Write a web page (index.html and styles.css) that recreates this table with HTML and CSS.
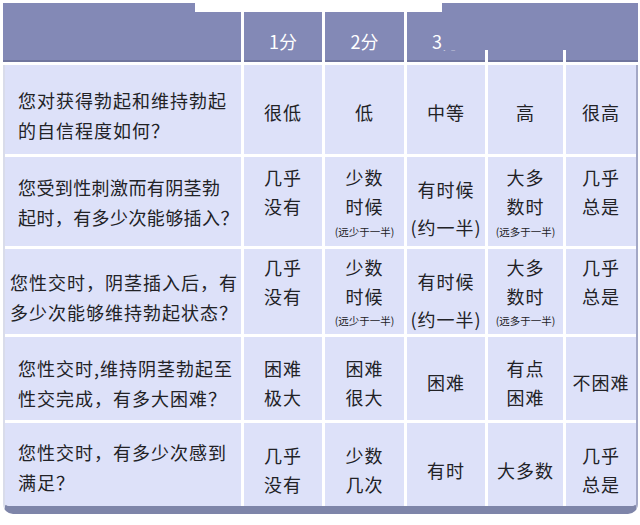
FILE: index.html
```html
<!DOCTYPE html>
<html lang="zh-CN">
<head>
<meta charset="utf-8">
<title>IIEF-5</title>
<link rel="stylesheet" href="styles.css">
</head>
<body>
<div class="sheet">
  <div class="head">
    <div class="hcell"></div>
    <div class="hcell">1分</div>
    <div class="hcell">2分</div>
    <div class="hcell">3分</div>
    <div class="hcell"></div>
    <div class="hcell"></div>
  </div>
  <div class="body">
    <div class="row r1">
      <div class="cell q">您对获得勃起和维持勃起<br>的自信程度如何？</div>
      <div class="cell a">很低</div>
      <div class="cell a">低</div>
      <div class="cell a">中等</div>
      <div class="cell a">高</div>
      <div class="cell a">很高</div>
    </div>
    <div class="row r2">
      <div class="cell q narrow">您受到性刺激而有阴茎勃<br>起时，有多少次能够插入？</div>
      <div class="cell a top"><span>几乎</span><span>没有</span></div>
      <div class="cell a top"><span>少数</span><span>时候</span><span class="small">(远少于一半)</span></div>
      <div class="cell a half"><span>有时候</span><span class="paren">(约一半)</span></div>
      <div class="cell a top"><span>大多</span><span>数时</span><span class="small">(远多于一半)</span></div>
      <div class="cell a top"><span>几乎</span><span>总是</span></div>
    </div>
    <div class="row r3">
      <div class="cell q tight">您性交时，阴茎插入后，有<br>多少次能够维持勃起状态？</div>
      <div class="cell a top"><span>几乎</span><span>没有</span></div>
      <div class="cell a top"><span>少数</span><span>时候</span><span class="small">(远少于一半)</span></div>
      <div class="cell a half"><span>有时候</span><span class="paren">(约一半)</span></div>
      <div class="cell a top"><span>大多</span><span>数时</span><span class="small">(远多于一半)</span></div>
      <div class="cell a top"><span>几乎</span><span>总是</span></div>
    </div>
    <div class="row r4">
      <div class="cell q">您性交时,维持阴茎勃起至<br>性交完成，有多大困难？</div>
      <div class="cell a">困难<br>极大</div>
      <div class="cell a">困难<br>很大</div>
      <div class="cell a">困难</div>
      <div class="cell a">有点<br>困难</div>
      <div class="cell a">不困难</div>
    </div>
    <div class="row r5">
      <div class="cell q">您性交时，有多少次感到<br>满足？</div>
      <div class="cell a">几乎<br>没有</div>
      <div class="cell a">少数<br>几次</div>
      <div class="cell a">有时</div>
      <div class="cell a">大多数</div>
      <div class="cell a">几乎<br>总是</div>
    </div>
  </div>
  <div class="mask-top"></div>
  <div class="mask-head"></div>
</div>
</body>
</html>
```
FILE: styles.css
```css
html, body {
  margin: 0;
  padding: 0;
  background: #ffffff;
}
body {
  font-family: "Noto Sans CJK SC", "Noto Sans", sans-serif;
  color: #222226;
}
.sheet {
  position: relative;
  margin: 3px 0 0 3px;
  width: 635px;
}
.head {
  display: grid;
  grid-template-columns: 238px 78px 79px 78px 75px 72px;
  column-gap: 3px;
}
.hcell {
  box-sizing: border-box;
  height: 59px;
  padding-top: 18px;
  background: #8389b6;
  border-bottom: 2px solid #6f759d;
  color: #ffffff;
  font-size: 18px;
  display: flex;
  align-items: center;
  justify-content: center;
}
.body {
  margin-top: 3px;
  background: #ffffff;
  display: grid;
  grid-template-columns: 236px 78px 79px 78px 75px 70px;
  grid-template-rows: 89px 89px 85px 83px 83px;
  gap: 3px;
  border-left: 2px solid #d9dcea;
  border-right: 2px solid #a3a8c6;
  border-bottom: 8px solid #7e85a9;
  border-radius: 0 0 10px 10px;
  overflow: hidden;
}
.row {
  display: contents;
}
.cell {
  box-sizing: border-box;
  background: #dde1f9;
  font-size: 18px;
  line-height: 29px;
  letter-spacing: 1px;
  display: flex;
  flex-direction: column;
  align-items: center;
  justify-content: center;
  text-align: center;
  white-space: nowrap;
}
.q {
  align-items: flex-start;
  text-align: left;
  padding-left: 13px;
  line-height: 30px;
  letter-spacing: 1px;
}
.q.narrow {
  letter-spacing: 0.4px;
}
.q.tight {
  padding-left: 5px;
}
.top {
  justify-content: flex-start;
  padding-top: 6px;
}
.half {
  justify-content: flex-start;
  padding-top: 18px;
}
.paren {
  margin-top: 9px;
  letter-spacing: 1px;
}
.small {
  font-size: 10.5px;
  line-height: 21px;
  letter-spacing: 0;
}
.r1 > .q { padding-top: 11px; }
.r1 > .a { padding-top: 6px; }
.r3 > .q { padding-top: 11px; }
.r3 > .top { padding-top: 4px; }
.r3 > .top .small { line-height: 19px; }
.r4 > .q { padding-top: 9px; }
.r4 > .a { padding-top: 8px; }
.r5 > .q { padding-top: 5px; }
.r5 > .a { padding-top: 11px; }
.mask-top {
  position: absolute;
  left: 192px;
  top: -3px;
  width: 250px;
  height: 12px;
  background: #ffffff;
}
.mask-head {
  position: absolute;
  left: 439px;
  top: 0;
  right: 0;
  height: 47px;
  background: #8389b6;
}
```
